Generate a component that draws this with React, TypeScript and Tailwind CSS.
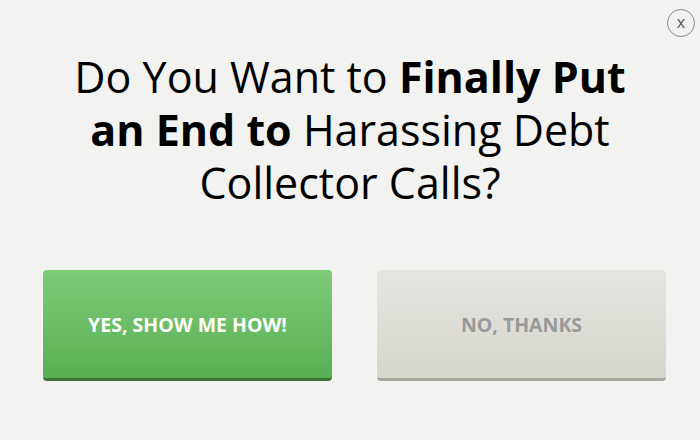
import React from "react";

export default function App() {
  return (
    <div
      className="relative w-[700px] h-[440px] bg-[#f2f2f0] overflow-hidden"
      style={{ fontFamily: '"Open Sans", sans-serif' }}
    >
      <button className="absolute left-[667px] top-[9px] w-[28px] h-[28px] rounded-full border border-[#8a8a8a] flex items-center justify-center text-[#555] text-[16px] leading-none pb-[2px]">
        x
      </button>
      <h1 className="pt-[50px] px-[65px] text-center text-[43px] leading-[53px] text-black font-normal">
        Do You Want to <b className="font-bold">Finally Put an End to</b> Harassing Debt Collector Calls?
      </h1>
      <div className="flex gap-[45px] pl-[43px] mt-[61px]">
        <button className="w-[289px] h-[111px] rounded-[4px] bg-gradient-to-b from-[#7ecb7a] to-[#58b052] border-b-[3px] border-[#3a7535] text-white font-bold text-[19.5px] uppercase flex items-center justify-center pt-[2px]">
          Yes, show me how!
        </button>
        <button className="w-[289px] h-[111px] rounded-[4px] bg-gradient-to-b from-[#e5e5e0] to-[#d6d6ce] border-b-[3px] border-[#a6a69a] text-[#999] font-bold text-[19.5px] uppercase flex items-center justify-center pt-[2px]">
          No, thanks
        </button>
      </div>
    </div>
  );
}
